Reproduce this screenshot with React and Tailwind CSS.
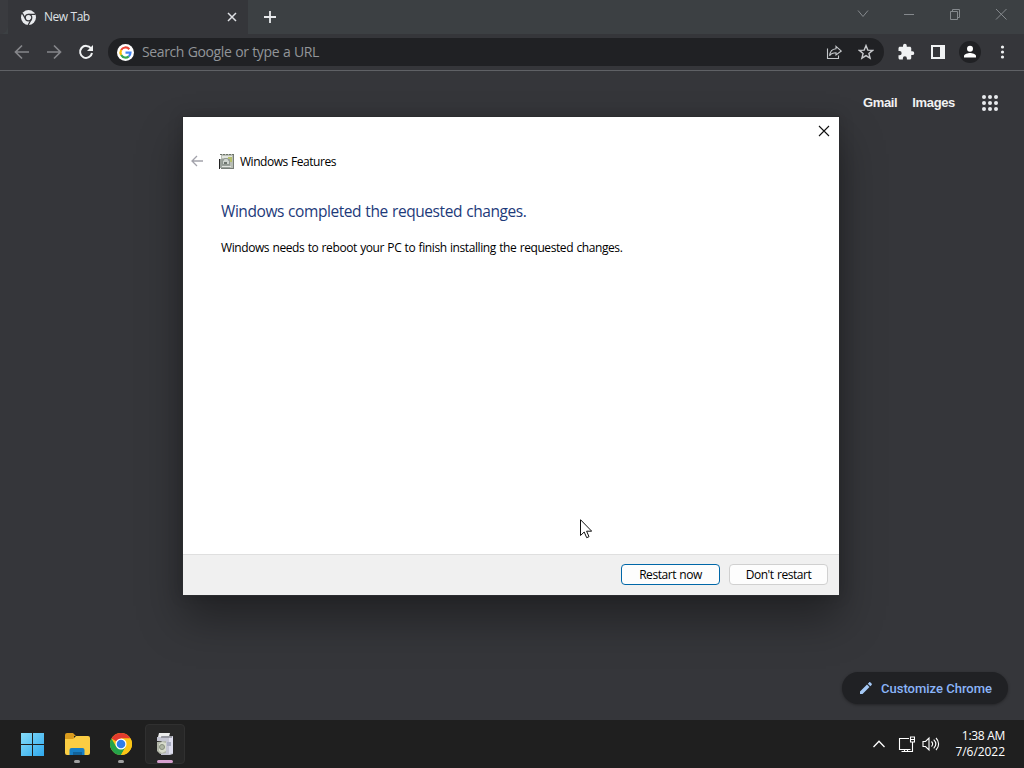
import React from 'react';

const ChromeMark = ({ className }) => (
  <svg className={className} viewBox="0 0 24 24">
    <circle cx="12" cy="12" r="12" fill="#fbc516" />
    <path d="M12 12 L1.6 6 A12 12 0 0 1 22.4 6 L12 6 Z" fill="#e33b2e" />
    <path d="M1.6 6 A12 12 0 0 0 12 24 L17.2 15 L12 12 L6.8 15 Z" fill="#25a34a" />
    <path d="M12 6 L22.4 6 A12 12 0 0 1 12 24 L17.2 15 Z" fill="#fbc516" />
    <circle cx="12" cy="12" r="6" fill="#fff" />
    <circle cx="12" cy="12" r="4.7" fill="#2f7de9" />
  </svg>
);

const ChromeMono = () => (
  <svg className="w-[15px] h-[15px] shrink-0" viewBox="0 0 24 24">
    <circle cx="12" cy="12" r="12" fill="#e8eaed" />
    <g fill="none" stroke="#35363a" strokeWidth="2">
      <circle cx="12" cy="12" r="5.2" />
      <path d="M12 6.8H23M7.5 14.600L2 5M16.500 14.600L11.500 24" />
    </g>
  </svg>
);

const GoogleMark = () => (
  <svg className="w-[17px] h-[17px] shrink-0" viewBox="0 0 34 34">
    <circle cx="17" cy="17" r="17" fill="#fff" />
    <g fill="none" strokeWidth="4.4">
      <path d="M24.6 10.4A10 10 0 0 0 8.3 12" stroke="#ea4335" />
      <path d="M8.3 12A10 10 0 0 0 8.3 22" stroke="#fbbc05" />
      <path d="M8.3 22A10 10 0 0 0 23.6 24.6" stroke="#34a853" />
      <path d="M23.6 24.6A10 10 0 0 0 27 17.2H17" stroke="#4285f4" />
    </g>
  </svg>
);

const WindowIcon = ({ children }) => (
  <div className="flex w-[46px] justify-center">
    <svg className="h-[14px] w-[14px]" viewBox="0 0 14 14" fill="none" stroke="currentColor" strokeWidth="1">
      {children}
    </svg>
  </div>
);

const TabStrip = () => (
  <div className="flex h-[34px] bg-[#3c4043]">
    <div className="h-full w-2 rounded-br-lg bg-[#3a3b3f]" />
    <div className="flex h-full w-[240px] items-center bg-[#35363a] pl-[13px] pr-[10px]">
      <ChromeMono />
      <span className="ml-2 text-[12px] tracking-[-0.55px] [word-spacing:0.6px] text-[#dfe1e5]">New Tab</span>
      <svg className="ml-auto h-3 w-3" viewBox="0 0 12 12" fill="none" stroke="#dfe1e5" strokeWidth="1.5">
        <path d="M2 2l8 8M10 2l-8 8" />
      </svg>
    </div>
    <svg className="ml-[15px] mt-[10px] h-[14px] w-[14px]" viewBox="0 0 14 14" fill="none" stroke="#e8eaed" strokeWidth="1.8">
      <path d="M7 1v12M1 7h12" />
    </svg>
    <div className="ml-auto flex h-[28px] items-center text-[#85898d]">
      <WindowIcon><path d="M2 3.5l5 6 5-6" /></WindowIcon>
      <WindowIcon><path d="M2 7.5h10" /></WindowIcon>
      <WindowIcon><path d="M2.5 4.5h7v8h-7zM4.500 4.500v-2h7v8h-2" /></WindowIcon>
      <WindowIcon><path d="M2 2l10.500 10.500M12.500 2L2 12.500" /></WindowIcon>
    </div>
  </div>
);

const Toolbar = () => (
  <div className="flex h-[37px] items-center border-b border-[#5f6165] bg-[#35363a] pl-[14px] pr-[14px]">
    <svg className="h-4 w-4 shrink-0" viewBox="0 0 16 16" fill="none" stroke="#85868a" strokeWidth="1.7">
      <path d="M15 8H2M8 1.500L1.500 8L8 14.500" />
    </svg>
    <svg className="ml-4 h-4 w-4 shrink-0" viewBox="0 0 16 16" fill="none" stroke="#85868a" strokeWidth="1.7">
      <path d="M1 8h13M8 1.500L14.500 8L8 14.500" />
    </svg>
    <svg className="ml-4 h-4 w-4 shrink-0" viewBox="0 0 16 16" fill="none" stroke="#f1f3f4" strokeWidth="2">
      <path d="M13 4.400A6 6 0 1 0 14 9" />
      <path d="M15 1v6H9z" fill="#f1f3f4" stroke="none" />
    </svg>
    <div className="ml-[14px] flex h-[28px] w-[776px] items-center rounded-full bg-[#202124] pl-[9px] pr-[10px]">
      <GoogleMark />
      <span className="ml-2 font-['Open_Sans',sans-serif] text-[14px] leading-5 tracking-[-0.39px] [word-spacing:0.5px] text-[#929599]">Search Google or type a URL</span>
      <svg className="ml-auto h-4 w-4" viewBox="0 0 16 16" fill="none" stroke="#c4c7ca" strokeWidth="1.1">
        <path d="M1.500 4.500v10h11v-3" />
        <path d="M10 2.300L15.300 7L10 11V8.700C7 8.700 5 9.500 3.600 11.700C4 7.500 6 5 10 4.700z" />
      </svg>
      <svg className="ml-4 h-4 w-4" viewBox="0 0 16 16" fill="none" stroke="#c8cacd" strokeWidth="1.400">
        <path d="M8 1.600l1.800 4.500 4.800.3-3.700 3.100 1.200 4.700L8 11.600l-4.100 2.600 1.200-4.700-3.700-3.100 4.800-.3z" />
      </svg>
    </div>
    <svg className="ml-[13px] h-[18px] w-[18px] shrink-0" viewBox="0 0 24 24" fill="#f1f3f4">
      <path d="M20.500 11H19V7c0-1.100-.9-2-2-2h-4V3.500a2.500 2.500 0 0 0-5 0V5H4c-1.100 0-2 .9-2 2v3.800h1.500a2.700 2.700 0 0 1 0 5.400H2V20c0 1.100.9 2 2 2h3.800v-1.500a2.700 2.700 0 0 1 5.400 0V22H17c1.100 0 2-.9 2-2v-4h1.500a2.500 2.500 0 0 0 0-5z" />
    </svg>
    <svg className="ml-[16px] h-[14px] w-[14px] shrink-0" viewBox="0 0 14 14">
      <path d="M1 1h12v12H1z" fill="none" stroke="#f1f3f4" strokeWidth="2" />
      <path d="M9 1h4v12H9z" fill="#f1f3f4" />
    </svg>
    <svg className="ml-[14px] h-[22px] w-[22px] shrink-0" viewBox="0 0 22 22">
      <circle cx="11" cy="11" r="11" fill="#202124" />
      <circle cx="11" cy="7.700" r="3" fill="#fff" />
      <path d="M5 16.500v-1.500c0-2 4-3 6-3s6 1 6 3v1.500z" fill="#fff" />
    </svg>
    <svg className="ml-auto h-4 w-4 shrink-0" viewBox="0 0 16 16" fill="#f1f3f4">
      <circle cx="8.500" cy="3" r="1.600" />
      <circle cx="8.500" cy="8" r="1.600" />
      <circle cx="8.500" cy="13" r="1.600" />
    </svg>
  </div>
);

const FeaturesIcon = ({ className }) => (
  <svg className={className} viewBox="0 0 16 16">
    <path d="M2 1h13v14H2z" fill="#b9beb5" />
    <path d="M1 1.500h15" stroke="#6c7269" strokeDasharray="2 1" />
    <path d="M3 3h10v2H3z" fill="#e2e5df" />
    <path d="M9 4h4v5H9z" fill="#b5bf6a" />
    <path d="M1 6h10v9H1z" fill="#9aa19b" />
    <path d="M.5 6v10" stroke="#222" />
    <path d="M3.500 8.500l2-3h3l2 3v3h-7z" fill="#cdd3ce" stroke="#7f8882" strokeWidth=".7" />
    <path d="M5 9h3v2H5z" fill="#6d756f" />
    <path d="M3 13.500h9" stroke="#e0e3df" />
    <path d="M14.500 2v13M2 15.500h13" stroke="#777d78" />
  </svg>
);

const FeaturesDialog = () => (
  <div className="absolute left-[182px] top-[116px] flex h-[480px] w-[658px] flex-col border border-[#2b2c2f] bg-white text-black shadow-[0_24px_40px_rgba(0,0,0,0.35),0_0_14px_rgba(0,0,0,0.15)]">
    <div className="flex h-[28px] items-center justify-end pr-[9px]">
      <svg className="h-3 w-3" viewBox="0 0 12 12" fill="none" stroke="#111" strokeWidth="1.100">
        <path d="M1 1l10 10M11 1L1 11" />
      </svg>
    </div>
    <div className="flex h-[33px] items-center pl-2">
      <svg className="mb-[1px] h-3 w-3" viewBox="0 0 12 12" fill="none" stroke="#a2a2aa" strokeWidth="1.300">
        <path d="M12 6H1M6 1L1 6l5 5" />
      </svg>
      <FeaturesIcon className="mb-[1px] ml-4 h-4 w-4" />
      <span className="ml-[5px] text-[12px] tracking-[-0.46px] [word-spacing:0.6px]">Windows Features</span>
    </div>
    <div className="flex-1 pl-[38px]">
      <h1 className="mt-[21px] text-[15.500px] leading-6 tracking-[-0.43px] [word-spacing:0.6px] text-[#1d3a7a]">Windows completed the requested changes.</h1>
      <p className="mt-[15px] text-[12px] leading-5 tracking-[-0.41px] [word-spacing:0.6px]">Windows needs to reboot your PC to finish installing the requested changes.</p>
    </div>
    <div className="flex h-[41px] items-start justify-end gap-[9px] border-t border-[#dfdfdf] bg-[#f0f0f0] pr-[11px] pt-[9px]">
      <button className="h-[21px] w-[99px] rounded-[4px] border border-[#0067a8] bg-[#fdfdfd] text-[12px] leading-[20px] tracking-[-0.44px] [word-spacing:0.6px]">Restart now</button>
      <button className="h-[21px] w-[99px] rounded-[4px] border border-[#d0d0d0] bg-[#fdfdfd] text-[12px] leading-[20px] tracking-[-0.44px] [word-spacing:0.6px]">Don't restart</button>
    </div>
  </div>
);

const NewTabPage = () => (
  <main className="flex flex-1 flex-col justify-between bg-[#35363a]">
    <div className="mt-[20px] flex h-6 items-center justify-end pr-[25px] font-['Liberation_Sans',sans-serif] text-[13px] font-bold tracking-[-0.35px] text-[#f1f1f1]">
      <span>Gmail</span>
      <span className="ml-[15px]">Images</span>
      <svg className="ml-[26px] h-[18px] w-[18px]" viewBox="0 0 18 18" fill="#e8eaed">
        {[3, 9, 15].map((y) => [3, 9, 15].map((x) => <circle key={`${x}-${y}`} cx={x} cy={y} r="2" />))}
      </svg>
    </div>
    <button className="mb-[16px] mr-4 flex h-8 w-[166px] items-center self-end rounded-full bg-[#202124] pl-[17px] font-['Roboto',sans-serif] text-[13px] font-medium text-[#8ab4f8] shadow-[0_1px_3px_rgba(0,0,0,0.35)]">
      <svg className="h-[14px] w-[14px]" viewBox="0 0 14 14" fill="#a4c8f5">
        <path d="M1 10.500V13h2.500l7-7L8 3.500zM8.800 2.700l2.500 2.500 1.300-1.300c.4-.4.4-.9 0-1.300L11.400 1.400c-.4-.4-.9-.4-1.300 0z" />
      </svg>
      <span className="ml-2 mt-[2px] whitespace-nowrap">Customize Chrome</span>
    </button>
  </main>
);

const Taskbar = () => (
  <footer className="flex h-12 items-center bg-[#1f1f1f] pr-[19px] text-white">
    <svg className="ml-[21px] h-[23px] w-[23px]" viewBox="0 0 23 23">
      <defs>
        <linearGradient id="win" x1="0" y1="0" x2="1" y2="1">
          <stop offset="0" stopColor="#86ddfa" />
          <stop offset="1" stopColor="#2fa8ed" />
        </linearGradient>
      </defs>
      <path d="M0 0h11v11H0zM12 0h11v11H12zM0 12h11v11H0zM12 12h11v11H12z" fill="url(#win)" />
    </svg>
    <div className="ml-[20px] flex h-full w-[26px] flex-col items-center pt-[13px]">
      <svg className="h-[22px] w-[25px]" viewBox="0 0 25 22">
        <path d="M0 2a2 2 0 0 1 2-2h6l3 3h-2v4H0z" fill="#d99b1d" />
        <path d="M0 6h8l3-3h12a2 2 0 0 1 2 2v15a2 2 0 0 1-2 2H2a2 2 0 0 1-2-2z" fill="#fbcd43" />
        <path d="M4.500 22v-5a2 2 0 0 1 2-2h11a2 2 0 0 1 2 2v5z" fill="#187fc5" />
        <path d="M8 19h9v3H8z" fill="#126299" />
      </svg>
      <div className="mt-[5px] h-[3px] w-[6px] rounded-full bg-[#a0a0a0]" />
    </div>
    <div className="ml-[18px] flex h-full w-[26px] flex-col items-center pt-[13px]">
      <ChromeMark className="h-[22px] w-[22px]" />
      <div className="mt-[5px] h-[3px] w-[6px] rounded-full bg-[#a0a0a0]" />
    </div>
    <div className="ml-[11px] flex h-[40px] w-[40px] flex-col items-center rounded-[4px] border border-[#303030] bg-[#272727] pt-[8px]">
      <svg className="h-[22px] w-[20px]" viewBox="0 0 20 22">
        <path d="M4 0h11l-1 4H3z" fill="#eceded" />
        <path d="M2 4h5v4H2zM7 3h11v18l-3 1H6z" fill="#c4c5d2" />
        <path d="M14 4h4v16l-4 1z" fill="#dedeee" />
        <path d="M6 4h11" stroke="#66686e" />
        <path d="M2 9l9-1v12l-6 1-3-3z" fill="#b3b7a9" />
        <path d="M4 11l3-2 4 1v8l-4 2-3-2z" fill="#d9ddcd" />
        <circle cx="7" cy="14" r="2.500" fill="#aeb5a3" stroke="#868d7d" />
        <path d="M12 9h4v4h-4z" fill="#aaaec1" />
      </svg>
      <div className="mt-[5px] h-[3px] w-4 shrink-0 rounded-full bg-[#d7a0cf]" />
    </div>
    <div className="ml-auto flex items-center">
      <svg className="h-3 w-[14px]" viewBox="0 0 14 12" fill="none" stroke="#fff" strokeWidth="1.300">
        <path d="M1.500 9L7 3.300L12.500 9" />
      </svg>
      <svg className="ml-[12px] h-[17px] w-[17px]" viewBox="0 0 17 17" fill="none" stroke="#fff" strokeWidth="1.100">
        <path d="M11 2.500H1.500v11h11M3.500 15.500h9M6.500 13.500v2M9.500 13.500v2" />
        <path d="M12.500 1h4v5h-4zM12.500 3.500h4M14.500 6v9.500h-3" />
      </svg>
      <svg className="ml-[7px] h-4 w-[18px]" viewBox="0 0 18 16" fill="none" stroke="#fff" strokeWidth="1.100">
        <path d="M1 5.500h2.500L7 2v12l-3.500-3.500H1z" />
        <path d="M9.500 5.500c1.400 1.500 1.400 3.500 0 5M11.700 3.700c2.600 2.600 2.600 6 0 8.600M14 2c3.500 3.500 3.500 8.500 0 12" />
      </svg>
    </div>
    <div className="ml-[14px] w-[51px] whitespace-nowrap text-right text-[12px] leading-4">
      <div className="flex justify-end tracking-[-0.3px]">1:38 AM</div>
      <div className="flex justify-end tracking-[-0.05px]">7/6/2022</div>
    </div>
  </footer>
);

export default function App() {
  return (
    <div className="relative flex h-screen w-screen flex-col overflow-hidden bg-[#35363a] font-['Open_Sans','Noto_Sans',sans-serif]">
      <TabStrip />
      <Toolbar />
      <NewTabPage />
      <Taskbar />
      <FeaturesDialog />
      {/* Mouse pointer */}
      <svg className="absolute left-[580px] top-[519px] h-5 w-3" viewBox="0 0 12 20" fill="#fff" stroke="#111" strokeWidth="1">
        <path d="M.5.700v15.800l3.700-3.500 2.500 5.700 2.300-1-2.400-5.500h5.100z" />
      </svg>
    </div>
  );
}
